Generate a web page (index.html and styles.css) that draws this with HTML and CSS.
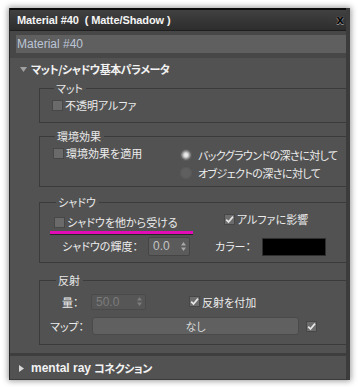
FILE: index.html
```html
<!DOCTYPE html>
<html lang="ja">
<head>
<meta charset="utf-8">
<link rel="stylesheet" href="styles.css">
</head>
<body>
<div class="win">
  <div class="titlebar">
    <span class="title">Material #40&nbsp; ( Matte/Shadow )</span>
    <span class="close">x</span>
  </div>
  <div class="namebar"><div class="namefield">Material #40</div></div>
  <div class="rollouts">
    <div class="rhead">
      <svg class="tri" width="7" height="5" viewBox="0 0 7 5"><polygon points="0,0 7,0 3.5,5" fill="#a0a0a0"/></svg>
      <span class="rtitle">マット/シャドウ基本パラメータ</span>
    </div>
    <div class="rbody">
      <fieldset class="grp g-matte">
        <legend>マット</legend>
        <div class="chk"><span class="box"></span><span>不透明アルファ</span></div>
      </fieldset>

      <fieldset class="grp g-env">
        <legend>環境効果</legend>
        <div class="env-grid">
          <div class="chk env-chk"><span class="box"></span><span>環境効果を適用</span></div>
          <div class="radios">
            <div class="radio-row"><span class="radio on"></span><span>バックグラウンドの深さに対して</span></div>
            <div class="radio-row"><span class="radio"></span><span>オブジェクトの深さに対して</span></div>
          </div>
        </div>
      </fieldset>

      <fieldset class="grp g-shadow">
        <legend>シャドウ</legend>
        <div class="sh-row1">
          <div class="chk sh-left"><span class="box"></span><span>シャドウを他から受ける</span></div>
          <div class="chk sh-right"><span class="box checked"><svg width="9" height="9" viewBox="0 0 9 9"><path d="M1.2 4.6 L3.5 7 L8 1.6" fill="none" stroke="#e6e6e6" stroke-width="1.7"/></svg></span><span>アルファに影響</span></div>
        </div>
        <div class="highlight"></div>
        <div class="sh-row2">
          <span class="lbl lbl-bright">シャドウの輝度：</span>
          <div class="spin spin-bright"><span>0.0</span><svg width="5" height="9" viewBox="0 0 5 9"><polygon points="2.5,0 5,3.5 0,3.5" fill="#a8a8a8"/><polygon points="0,5.5 5,5.5 2.5,9" fill="#a8a8a8"/></svg></div>
          <span class="lbl lbl-color">カラー：</span>
          <div class="swatch"></div>
        </div>
      </fieldset>

      <fieldset class="grp g-refl">
        <legend>反射</legend>
        <div class="rf-row1">
          <span class="lbl lbl-amount">量：</span>
          <div class="spin spin-amount disabled"><span>50.0</span><svg width="5" height="9" viewBox="0 0 5 9"><polygon points="2.5,0 5,3.5 0,3.5" fill="#7c7c7c"/><polygon points="0,5.5 5,5.5 2.5,9" fill="#7c7c7c"/></svg></div>
          <div class="chk rf-chk"><span class="box checked"><svg width="9" height="9" viewBox="0 0 9 9"><path d="M1.2 4.6 L3.5 7 L8 1.6" fill="none" stroke="#e6e6e6" stroke-width="1.7"/></svg></span><span>反射を付加</span></div>
        </div>
        <div class="rf-row2">
          <span class="lbl lbl-map">マップ：</span>
          <div class="mapbtn">なし</div>
          <span class="box checked"><svg width="9" height="9" viewBox="0 0 9 9"><path d="M1.2 4.6 L3.5 7 L8 1.6" fill="none" stroke="#e6e6e6" stroke-width="1.7"/></svg></span>
        </div>
      </fieldset>
    </div>
    <div class="rsep"></div>
    <div class="rhead rhead2">
      <svg class="tri2" width="5" height="7" viewBox="0 0 5 7"><polygon points="0,0 5,3.5 0,7" fill="#d8d8d8"/></svg>
      <span class="mr">mental ray</span><span class="rtitle">コネクション</span>
    </div>
  </div>
</div>
</body>
</html>
```

FILE: styles.css
```css
* { box-sizing: border-box; }

body {
  margin: 0;
  width: 358px;
  height: 387px;
  overflow: hidden;
  background: #ffffff;
  font-family: "Noto Sans CJK JP", sans-serif;
  font-feature-settings: "palt";
}

.win {
  margin: 8px 0 0 9px;
  width: 341px;
  height: 372px;
  background: #525252;
  border-left: 1px solid #2a2a2a;
  border-right: 4px solid #3c3c3c;
  border-bottom: 1px solid #3a3a3a;
  box-shadow: 0 0 6px 1px rgba(0, 0, 0, 0.4);
  display: flex;
  flex-direction: column;
  overflow: hidden;
}

.titlebar {
  height: 23px;
  flex: none;
  border-top: 2px solid #0c0c0c;
  border-bottom: 1px solid #1f1f1f;
  background: linear-gradient(#414141, #2d2d2d);
  display: flex;
  align-items: center;
  justify-content: space-between;
  padding: 0 2px 0 7px;
  font: bold 11px "Liberation Sans", sans-serif;
  letter-spacing: -0.1px;
  color: #f4f4f4;
}

.close {
  font: bold 12px "DejaVu Sans", sans-serif;
  color: #0a0a0a;
  text-shadow: 0 0 1px #b0b0b0, 0 1px 0 #8a8a8a;
  line-height: 12px;
}

.namebar {
  height: 27px;
  flex: none;
  background: #474747;
  padding: 4px 0 0 6px;
}

.namefield {
  height: 18px;
  background: #5f5f5f;
  color: #bcc5d6;
  font: 12px "Liberation Sans", sans-serif;
  line-height: 18px;
  padding-left: 1px;
}

.rollouts {
  flex: 1;
  display: flex;
  flex-direction: column;
}

.rhead {
  height: 22px;
  flex: none;
  display: flex;
  align-items: center;
  padding-left: 10px;
  font-weight: bold;
  font-size: 11px;
  color: #f2f2f2;
}

.rtitle { letter-spacing: -0.5px; }

.tri { margin-right: 4px; }

.rbody {
  padding: 1px 0 8px 29px;
}

.grp {
  margin: 0;
  padding: 0;
  border: 1px solid #3b3b3b;
  border-right: none;
  min-width: 0;
  color: #ececec;
  font-size: 11px;
}

.grp legend {
  padding: 0 3px 0 2px;
  margin-left: 2px;
  line-height: 14px;
  font-size: 11px;
  color: #e8e8e8;
}

.chk {
  display: flex;
  align-items: center;
  gap: 2px;
  line-height: 14px;
  font-size: 11px;
  color: #ececec;
  white-space: nowrap;
}

.box {
  width: 11px;
  height: 11px;
  flex: none;
  background: #6a6a6a;
  border: 1px solid #474747;
  display: flex;
  align-items: center;
  justify-content: center;
}

.box.checked { background: #6c6c6c; }

/* マット */
.g-matte { padding: 3px 0 10px 12px; }

/* 環境効果 */
.g-env { margin-top: 6px; padding: 3px 0 4px 13px; }

.env-grid { display: flex; }

.env-chk {
  width: 127px;
  height: 18px;
  margin-top: -2px;
}

.radios { display: flex; flex-direction: column; }

.radio-row {
  height: 18px;
  display: flex;
  align-items: center;
  gap: 6px;
  font-size: 11px;
  letter-spacing: -0.6px;
  color: #ececec;
  white-space: nowrap;
}

.radio {
  width: 12px;
  height: 12px;
  flex: none;
  border-radius: 50%;
  background: #5f5f5f;
  box-shadow: inset 0 0 0 1px #585858;
}

.radio.on {
  background: radial-gradient(circle, #f4f4f4 0, #dcdcdc 2px, #8a8a8a 4px, #646464 6px);
}

/* シャドウ */
.g-shadow { margin-top: 8px; padding: 0 0 6px 14px; }

.sh-row1 {
  height: 22px;
  display: flex;
  align-items: flex-start;
}

.sh-left { margin-top: 6px; width: 170px; }
.sh-right { margin-top: 3px; }

.highlight {
  margin-left: -4px;
  width: 143px;
  height: 4px;
  background: #e20bb5;
  border-bottom: 1px solid #262626;
}

.sh-row2 {
  margin-top: 1px;
  height: 20px;
  display: flex;
  align-items: center;
}

.lbl {
  font-size: 11px;
  color: #ececec;
  white-space: nowrap;
}

.lbl-bright { margin-left: 8px; width: 86px; }

.spin {
  display: flex;
  align-items: center;
  justify-content: space-between;
  background: #5b5b5b;
  border: 1px solid #454545;
  border-radius: 2px;
  padding: 0 3px 0 4px;
  font: 12px "Liberation Sans", sans-serif;
  color: #c4c4c4;
}

.spin-bright { width: 42px; height: 19px; }

.lbl-color { margin-left: 25px; width: 47px; }

.swatch {
  width: 64px;
  height: 18px;
  margin-top: 2px;
  background: #000000;
  border: 1px solid #2e2e2e;
}

/* 反射 */
.g-refl { margin-top: 10px; padding: 6px 0 9px 14px; }

.rf-row1 {
  height: 17px;
  display: flex;
  align-items: center;
}

.lbl-amount { margin-left: 8px; width: 29px; }

.spin-amount { width: 55px; height: 16px; }

.spin.disabled {
  background: #565656;
  border-color: #4a4a4a;
  color: #7c7c7c;
}

.rf-chk { margin-left: 43px; }

.rf-row2 {
  margin-top: 7px;
  height: 18px;
  display: flex;
  align-items: center;
}

.lbl-map { margin-left: -4px; width: 42px; }

.mapbtn {
  width: 207px;
  height: 18px;
  background: #606060;
  border: 1px solid #4a4a4a;
  border-radius: 3px;
  color: #d8d8d8;
  font-size: 11px;
  line-height: 16px;
  text-align: center;
  margin-right: 7px;
}

.rsep {
  height: 3px;
  background: #3e3e3e;
  margin-bottom: 1px;
}

.rhead2 { padding-left: 9px; }

.tri2 { margin-right: 7px; }

.mr {
  font: bold 12px "Liberation Sans", sans-serif;
  margin-right: 3px;
}
```
